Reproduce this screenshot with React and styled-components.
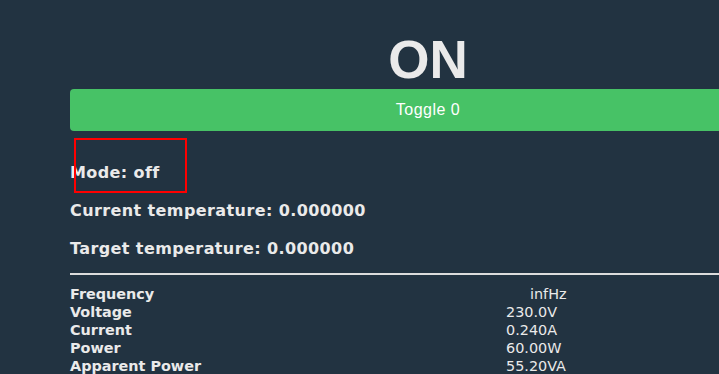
import React from "react";
import styled, { createGlobalStyle } from "styled-components";

const Global = createGlobalStyle`
  html, body {
    margin: 0;
    padding: 0;
    background: #223341;
    overflow: hidden;
  }
  body {
    font-family: "DejaVu Sans", Verdana, sans-serif;
    color: #eaeaea;
  }
`;

const Page = styled.div`
  position: relative;
  margin-left: 70px;
  width: 716px;
  padding-top: 30px;
`;

const State = styled.div`
  font-family: "Liberation Sans", Arial, sans-serif;
  font-weight: 700;
  font-size: 53px;
  line-height: 59px;
  text-align: center;
  color: #eaeaea;
`;

const Toggle = styled.button`
  display: block;
  width: 100%;
  height: 42px;
  border: 0;
  border-radius: 4px;
  background: #47c266;
  color: #fff;
  font-family: "Liberation Sans", Arial, sans-serif;
  font-size: 16px;
  letter-spacing: 0.5px;
  cursor: pointer;
`;

const Info = styled.div`
  display: flex;
  flex-direction: column;
  gap: 19px;
  margin-top: 32px;
`;

const Line = styled.div`
  font-weight: 700;
  font-size: 16px;
  line-height: 19px;
  letter-spacing: 0.4px;
`;

const Highlight = styled.div`
  position: absolute;
  left: 4px;
  top: 138px;
  width: 109px;
  height: 51px;
  border: 2px solid #ff0000;
  pointer-events: none;
`;

const Rule = styled.hr`
  margin: 15px 0 10px;
  border: 0;
  height: 2px;
  background: #dcdcdc;
`;

const Table = styled.div`
  display: grid;
  grid-template-columns: 436px 1fr;
  font-size: 14.4px;
  line-height: 18px;
`;

const Label = styled.div`
  font-weight: 700;
`;

const Value = styled.div`
  padding-left: ${(p) => p.$indent || 0}px;
`;

const rows = [
  ["Frequency", "infHz", 24],
  ["Voltage", "230.0V"],
  ["Current", "0.240A"],
  ["Power", "60.00W"],
  ["Apparent Power", "55.20VA"],
];

export default function App() {
  return (
    <>
      <Global />
      <Page>
        <State>ON</State>
        <Toggle>Toggle 0</Toggle>
        <Info>
          <Line>Mode: off</Line>
          <Line>Current temperature: 0.000000</Line>
          <Line>Target temperature: 0.000000</Line>
        </Info>
        <Rule />
        <Table>
          {rows.map(([label, value, indent]) => (
            <React.Fragment key={label}>
              <Label>{label}</Label>
              <Value $indent={indent}>{value}</Value>
            </React.Fragment>
          ))}
        </Table>
        <Highlight />
      </Page>
    </>
  );
}
